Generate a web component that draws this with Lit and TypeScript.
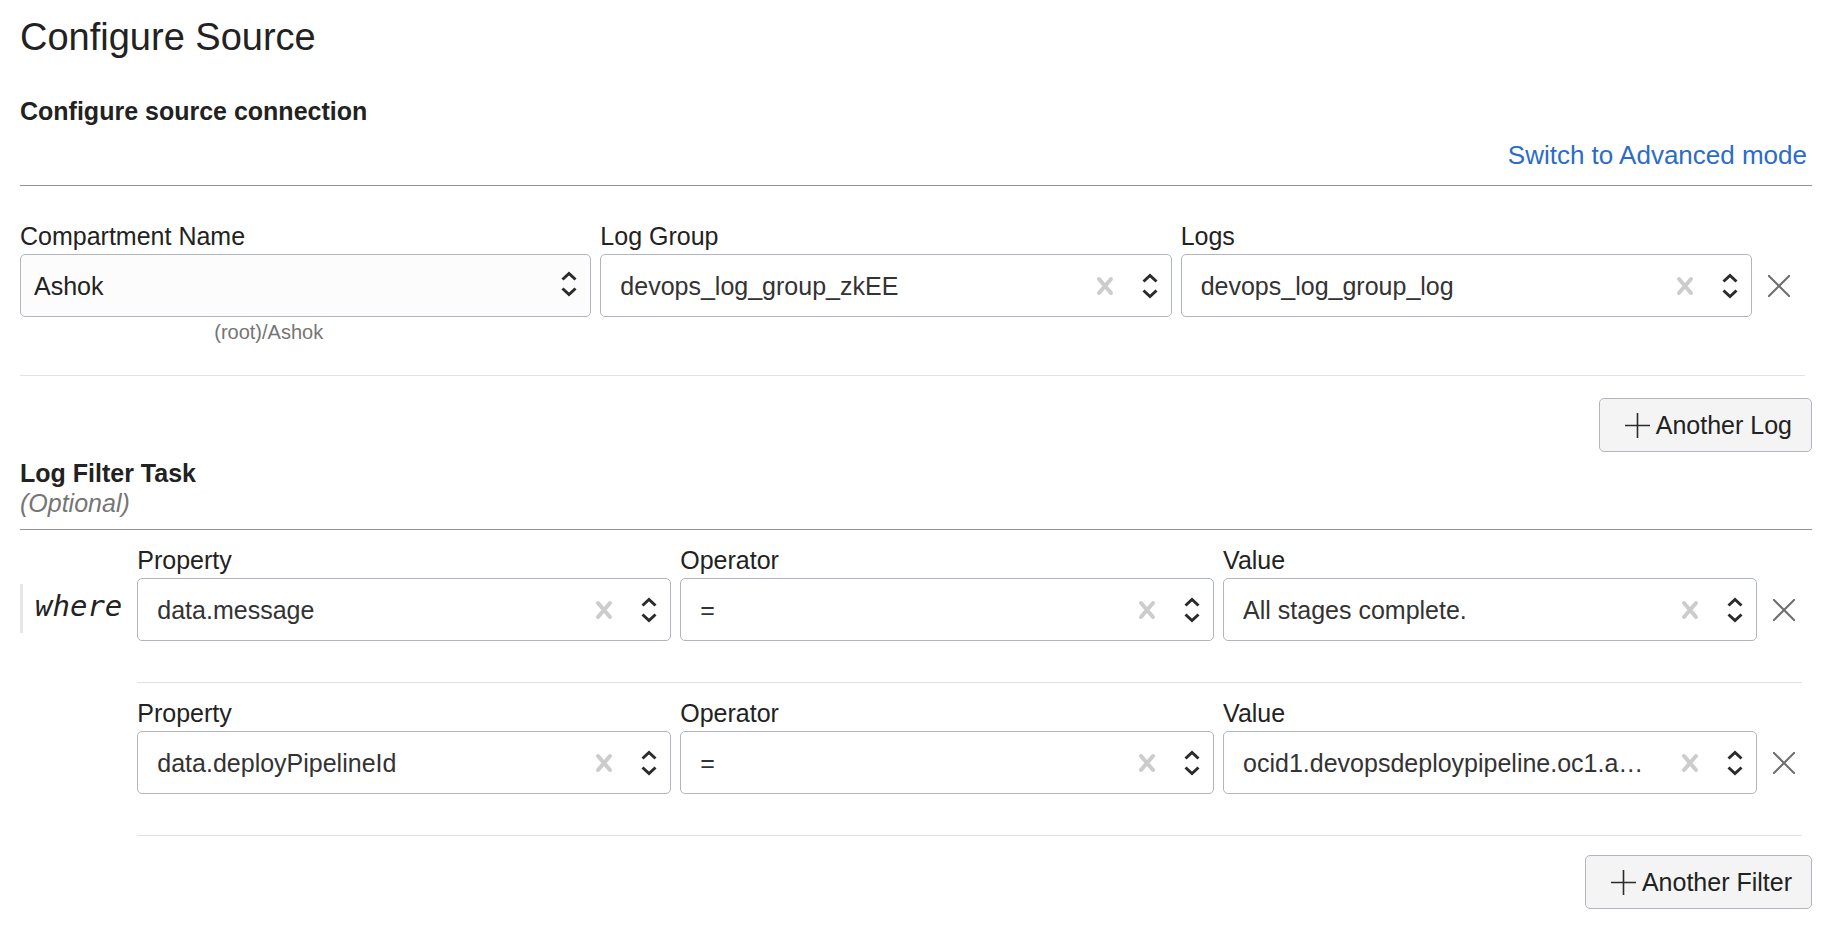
import { LitElement, html, css, nothing } from "lit";
import { customElement, property } from "lit/decorators.js";

interface Field {
  label: string;
  value: string;
  hint?: string;
  solid?: boolean;
}

const sourceFields: Field[] = [
  { label: "Compartment Name", value: "Ashok", hint: "(root)/Ashok", solid: true },
  { label: "Log Group", value: "devops_log_group_zkEE" },
  { label: "Logs", value: "devops_log_group_log" },
];

const filterRows: Field[][] = [
  [
    { label: "Property", value: "data.message" },
    { label: "Operator", value: "=" },
    { label: "Value", value: "All stages complete." },
  ],
  [
    { label: "Property", value: "data.deployPipelineId" },
    { label: "Operator", value: "=" },
    { label: "Value", value: "ocid1.devopsdeploypipeline.oc1.a…" },
  ],
];

@customElement("select-field")
export class SelectField extends LitElement {
  @property({ attribute: false }) field!: Field;

  static styles = css`
    :host {
      display: block;
      min-width: 0;
    }
    .label {
      display: block;
      line-height: 32px;
      margin-bottom: 2px;
    }
    .control {
      display: grid;
      align-items: center;
    }
    .select,
    .tools {
      grid-area: 1 / 1;
    }
    .select {
      appearance: none;
      box-sizing: border-box;
      width: 100%;
      height: 63px;
      margin: 0;
      padding: 0 90px 0 19px;
      border: 1px solid #b1b5bd;
      border-radius: 5px;
      background: #fff;
      color: #333;
      font: inherit;
      text-overflow: ellipsis;
    }
    .solid {
      padding: 0 48px 0 13px;
      background: #fcfcfc;
      color: #222;
    }
    .tools {
      display: flex;
      align-items: center;
      justify-self: end;
      gap: 28px;
      padding-right: 14px;
      pointer-events: none;
    }
    .solid + .tools {
      padding-bottom: 4px;
    }
    .clear {
      display: flex;
      padding: 0;
      border: 0;
      background: none;
      pointer-events: auto;
      cursor: pointer;
    }
    .hint {
      padding-left: 34%;
      color: #757575;
      font-size: 20px;
      line-height: 30px;
    }
  `;

  render() {
    const { label, value, hint, solid } = this.field;
    return html`
      <label class="label" for="control">${label}</label>
      <div class="control">
        <select class="select ${solid ? "solid" : ""}" id="control">
          <option selected>${value}</option>
        </select>
        <div class="tools">
          ${solid
            ? nothing
            : html`<button class="clear" type="button" aria-label="Clear ${label}">
                <svg width="18" height="20" viewBox="0 0 18 20" fill="none" stroke="#ccc" stroke-width="4" stroke-linecap="round">
                  <path d="M3 3l12 14M15 3L3 17" />
                </svg>
              </button>`}
          <svg width="16" height="26" viewBox="0 0 16 26" fill="none" stroke="#2b2b2b" stroke-width="3">
            <path d="M1.500 8.500L8 2.500l6.500 6M1.500 17.500l6.500 6 6.500-6" />
          </svg>
        </div>
      </div>
      ${hint ? html`<div class="hint">${hint}</div>` : nothing}
    `;
  }
}

@customElement("app-root")
export class AppRoot extends LitElement {
  static styles = css`
    :host {
      display: block;
      box-sizing: border-box;
      min-height: 100vh;
      padding: 14px 26px 26px 20px;
      background: #fff;
      color: #222;
      font-family: "Liberation Sans", Arial, sans-serif;
      font-size: 25px;
      line-height: 30px;
    }
    h1,
    h2,
    p {
      margin: 0;
    }
    .title {
      font-size: 38px;
      font-weight: 400;
      line-height: 46px;
    }
    .heading {
      font-size: 25px;
      font-weight: 700;
      line-height: 30px;
    }
    .source-heading {
      margin-top: 36px;
    }
    .mode {
      display: flex;
      justify-content: flex-end;
      padding: 14px 5px 15px 0;
      border-bottom: 1px solid #8f9296;
    }
    .link {
      color: #2b6cc9;
      font-size: 26px;
      text-decoration: none;
    }
    .row {
      display: grid;
      grid-template-columns: repeat(3, minmax(0, 1fr)) 29px;
      column-gap: 9px;
      border-bottom: 1px solid #e2e2e2;
    }
    .source-row {
      margin: 34px 7px 0 0;
      padding: 0 15px 28px 0;
    }
    .filter-row {
      margin-right: 10px;
      padding: 14px 7px 41px 0;
    }
    .remove {
      display: flex;
      align-items: center;
      justify-content: flex-end;
      justify-self: end;
      width: 36px;
      height: 63px;
      margin: 34px 0 0;
      padding: 0;
      border: 0;
      background: none;
      cursor: pointer;
    }
    .actions {
      display: flex;
      justify-content: flex-end;
      margin-top: 19px;
    }
    .source-row + .actions {
      margin-top: 22px;
    }
    .add {
      display: flex;
      align-items: center;
      gap: 6px;
      height: 54px;
      padding: 0 19px 0 25px;
      border: 1px solid #b1b5bd;
      border-radius: 5px;
      background: #f4f4f4;
      color: #222;
      font: inherit;
      cursor: pointer;
    }
    .filter-heading {
      margin-top: 6px;
    }
    .optional {
      padding-bottom: 11px;
      border-bottom: 1px solid #8f9296;
      color: #757575;
      font-style: italic;
    }
    .filters {
      display: grid;
      grid-template-columns: auto minmax(0, 1fr);
      column-gap: 15px;
      align-items: start;
    }
    .where {
      margin-top: 54px;
      padding: 5px 0 9px 12px;
      border-left: 3px solid #e6e6e6;
      font-family: "DejaVu Sans Mono", monospace;
      font-size: 29px;
      font-style: italic;
      line-height: 35px;
    }
  `;

  private removeButton(name: string) {
    return html`<button class="remove" type="button" aria-label="Remove ${name}">
      <svg width="22" height="22" viewBox="0 0 22 22" fill="none" stroke="#6e6e6e" stroke-width="2" stroke-linecap="round">
        <path d="M.5.5l21 21M21.500.5L.5 21.500" />
      </svg>
    </button>`;
  }

  private addButton(text: string) {
    return html`<div class="actions">
      <button class="add" type="button">
        <svg width="25" height="25" viewBox="0 0 25 25" fill="none" stroke="#2b2b2b" stroke-width="1.600">
          <path d="M12.500 0v25M0 12.500h25" />
        </svg>
        <span>${text}</span>
      </button>
    </div>`;
  }

  private row(fields: Field[], kind: string, name: string) {
    return html`<div class="row ${kind}">
      ${fields.map((field) => html`<select-field .field=${field}></select-field>`)}
      ${this.removeButton(name)}
    </div>`;
  }

  render() {
    return html`
      <main>
        <h1 class="title">Configure Source</h1>
        <section>
          <h2 class="heading source-heading">Configure source connection</h2>
          <div class="mode"><a class="link" href="#advanced">Switch to Advanced mode</a></div>
          ${this.row(sourceFields, "source-row", "log")}
          ${this.addButton("Another Log")}
        </section>
        <section>
          <h2 class="heading filter-heading">Log Filter Task</h2>
          <p class="optional">(Optional)</p>
          <div class="filters">
            <div class="where">where</div>
            <div>${filterRows.map((fields) => this.row(fields, "filter-row", "filter"))}</div>
          </div>
          ${this.addButton("Another Filter")}
        </section>
      </main>
    `;
  }
}
